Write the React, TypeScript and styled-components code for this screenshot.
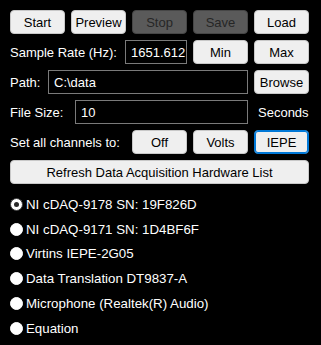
import React from "react";
import styled, { createGlobalStyle } from "styled-components";

const Global = createGlobalStyle`
  html, body { margin: 0; padding: 0; background: #000; }
  body { font-family: "Liberation Sans", Arial, sans-serif; font-size: 13px; color: #fff; }
  * { box-sizing: border-box; }
`;

const Panel = styled.div`
  width: 321px;
  height: 345px;
  background: #000;
  padding: 10px 12px 0 10px;
  display: flex;
  flex-direction: column;
`;

const Row = styled.div`
  display: flex;
  align-items: center;
  height: 24px;
  gap: 6px;
  margin-bottom: 6px;
`;

const Label = styled.span`
  flex: 1;
  white-space: nowrap;
  color: #fff;
  font-size: 13px;
`;

const Btn = styled.button<{ $w?: number; $disabled?: boolean; $focus?: boolean }>`
  width: ${(p) => (p.$w ? `${p.$w}px` : "55px")};
  height: 24px;
  flex: none;
  padding: 0;
  border-radius: 4px;
  font-family: "Liberation Sans", Arial, sans-serif;
  font-size: 13px;
  background: ${(p) => (p.$disabled ? "#5a5a5a" : "#efefef")};
  color: ${(p) => (p.$disabled ? "#262626" : "#000")};
  border: 1px solid ${(p) => (p.$focus ? "#0078d7" : p.$disabled ? "#464646" : "#c8c8c8")};
  box-shadow: ${(p) => (p.$focus ? "inset 0 0 0 1px #0078d7" : "none")};
`;

const Field = styled.div<{ $w: number }>`
  width: ${(p) => p.$w}px;
  height: 24px;
  flex: none;
  border: 1px solid #7a7a7a;
  background: #000;
  color: #fff;
  padding: 0 0 0 5px;
  display: flex;
  align-items: center;
  overflow: hidden;
  white-space: nowrap;
  font-size: 13px;
`;

const Unit = styled.span`
  width: 55px;
  flex: none;
  padding-left: 4px;
  font-size: 13px;
`;

const RadioList = styled.div`
  display: flex;
  flex-direction: column;
  margin-top: 2px;
`;

const RadioRow = styled.div`
  display: flex;
  align-items: center;
  height: 24.8px;
  gap: 3px;
  font-size: 13.3px;
`;

const Circle = styled.span<{ $on?: boolean }>`
  width: 13px;
  height: 13px;
  border-radius: 50%;
  background: #fff;
  border: 1px solid ${(p) => (p.$on ? "#3a3a3a" : "#fff")};
  flex: none;
  display: flex;
  align-items: center;
  justify-content: center;
  &::after {
    content: "";
    display: ${(p) => (p.$on ? "block" : "none")};
    width: 5px;
    height: 5px;
    border-radius: 50%;
    background: #2a2a2a;
  }
`;

const devices = [
  "NI cDAQ-9178 SN: 19F826D",
  "NI cDAQ-9171 SN: 1D4BF6F",
  "Virtins IEPE-2G05",
  "Data Translation DT9837-A",
  "Microphone (Realtek(R) Audio)",
  "Equation",
];

export default function App() {
  return (
    <>
      <Global />
      <Panel>
        <Row>
          <Btn>Start</Btn>
          <Btn>Preview</Btn>
          <Btn $disabled>Stop</Btn>
          <Btn $disabled>Save</Btn>
          <Btn>Load</Btn>
        </Row>
        <Row>
          <Label>Sample Rate (Hz):</Label>
          <Field $w={62}>1651.612</Field>
          <Btn>Min</Btn>
          <Btn>Max</Btn>
        </Row>
        <Row>
          <Label>Path:</Label>
          <Field $w={200}>C:\data</Field>
          <Btn>Browse</Btn>
        </Row>
        <Row>
          <Label>File Size:</Label>
          <Field $w={173}>10</Field>
          <Unit>Seconds</Unit>
        </Row>
        <Row>
          <Label>Set all channels to:</Label>
          <Btn>Off</Btn>
          <Btn>Volts</Btn>
          <Btn $focus>IEPE</Btn>
        </Row>
        <Row>
          <Btn $w={299}>Refresh Data Acquisition Hardware List</Btn>
        </Row>
        <RadioList>
          {devices.map((d, i) => (
            <RadioRow key={d}>
              <Circle $on={i === 0} />
              <span>{d}</span>
            </RadioRow>
          ))}
        </RadioList>
      </Panel>
    </>
  );
}
